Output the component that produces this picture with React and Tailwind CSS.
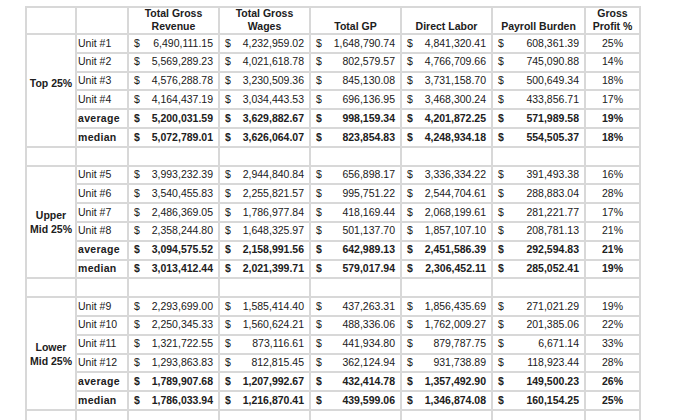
import React from 'react';

const sections = [
  {
    label: ['Top 25%'],
    raise: true,
    rows: [
      ['Unit #1', '6,490,111.15', '4,232,959.02', '1,648,790.74', '4,841,320.41', '608,361.39', '25%'],
      ['Unit #2', '5,569,289.23', '4,021,618.78', '802,579.57', '4,766,709.66', '745,090.88', '14%'],
      ['Unit #3', '4,576,288.78', '3,230,509.36', '845,130.08', '3,731,158.70', '500,649.34', '18%'],
      ['Unit #4', '4,164,437.19', '3,034,443.53', '696,136.95', '3,468,300.24', '433,856.71', '17%'],
      ['average', '5,200,031.59', '3,629,882.67', '998,159.34', '4,201,872.25', '571,989.58', '19%'],
      ['median', '5,072,789.01', '3,626,064.07', '823,854.83', '4,248,934.18', '554,505.37', '18%'],
    ],
  },
  {
    label: ['Upper', 'Mid 25%'],
    rows: [
      ['Unit #5', '3,993,232.39', '2,944,840.84', '656,898.17', '3,336,334.22', '391,493.38', '16%'],
      ['Unit #6', '3,540,455.83', '2,255,821.57', '995,751.22', '2,544,704.61', '288,883.04', '28%'],
      ['Unit #7', '2,486,369.05', '1,786,977.84', '418,169.44', '2,068,199.61', '281,221.77', '17%'],
      ['Unit #8', '2,358,244.80', '1,648,325.97', '501,137.70', '1,857,107.10', '208,781.13', '21%'],
      ['average', '3,094,575.52', '2,158,991.56', '642,989.13', '2,451,586.39', '292,594.83', '21%'],
      ['median', '3,013,412.44', '2,021,399.71', '579,017.94', '2,306,452.11', '285,052.41', '19%'],
    ],
  },
  {
    label: ['Lower', 'Mid 25%'],
    rows: [
      ['Unit #9', '2,293,699.00', '1,585,414.40', '437,263.31', '1,856,435.69', '271,021.29', '19%'],
      ['Unit #10', '2,250,345.33', '1,560,624.21', '488,336.06', '1,762,009.27', '201,385.06', '22%'],
      ['Unit #11', '1,321,722.55', '873,116.61', '441,934.80', '879,787.75', '6,671.14', '33%'],
      ['Unit #12', '1,293,863.83', '812,815.45', '362,124.94', '931,738.89', '118,923.44', '28%'],
      ['average', '1,789,907.68', '1,207,992.67', '432,414.78', '1,357,492.90', '149,500.23', '26%'],
      ['median', '1,786,033.94', '1,216,870.41', '439,599.06', '1,346,874.08', '160,154.25', '25%'],
    ],
  },
];

const headers = [
  ['', ''],
  ['', ''],
  ['Total Gross', 'Revenue'],
  ['Total Gross', 'Wages'],
  ['', 'Total GP'],
  ['', 'Direct Labor'],
  ['', 'Payroll Burden'],
  ['Gross', 'Profit %'],
];

const BlankRow = ({ id }) =>
  [...Array(8)].map((_, i) => <div key={`${id}-${i}`} className="bg-white h-[16.8px]" />);

export default function App() {
  return (
    <div className="min-h-screen bg-white pt-[6px] pl-[25px] font-['Liberation_Sans',Arial,sans-serif] text-[10.5px] text-[#202020]">
      <div className="inline-grid grid-cols-[48px_50px_89px_89px_89px_89px_91px_53px] gap-[2px] p-[2px] bg-[#d8d8d8]">
        {/* Header */}
        {headers.map(([a, b], i) => (
          <div key={i} className="bg-white h-[25px] flex flex-col justify-end items-center font-bold leading-[13px]">
            {a && <span>{a}</span>}
            {b && <span>{b}</span>}
          </div>
        ))}

        {sections.map((section, s) => (
          <React.Fragment key={s}>
            {s > 0 && <BlankRow id={`b${s}`} />}
            <div
              className={`row-span-6 bg-white flex flex-col items-center justify-center font-bold leading-[14px] ${
                section.raise ? 'pb-[15px]' : ''
              }`}
            >
              {section.label.map((l) => (
                <span key={l}>{l}</span>
              ))}
            </div>
            {section.rows.map((row) => {
              const bold = row[0] === 'average' || row[0] === 'median';
              return (
                <React.Fragment key={row[0]}>
                  <div className={`bg-white h-[16.8px] flex items-center pl-[1px] ${bold ? 'font-bold tracking-[0.3px]' : ''}`}>
                    {row[0]}
                  </div>
                  {row.slice(1, 6).map((val, j) => (
                    <div
                      key={j}
                      className={`bg-white h-[16.8px] flex items-center justify-between pl-[5px] pr-[5px] ${bold ? 'font-bold' : ''}`}
                    >
                      <span>$</span>
                      <span>{val}</span>
                    </div>
                  ))}
                  <div className={`bg-white h-[16.8px] flex items-center justify-center ${bold ? 'font-bold' : ''}`}>
                    {row[6]}
                  </div>
                </React.Fragment>
              );
            })}
          </React.Fragment>
        ))}

        <BlankRow id="end" />
      </div>
    </div>
  );
}
